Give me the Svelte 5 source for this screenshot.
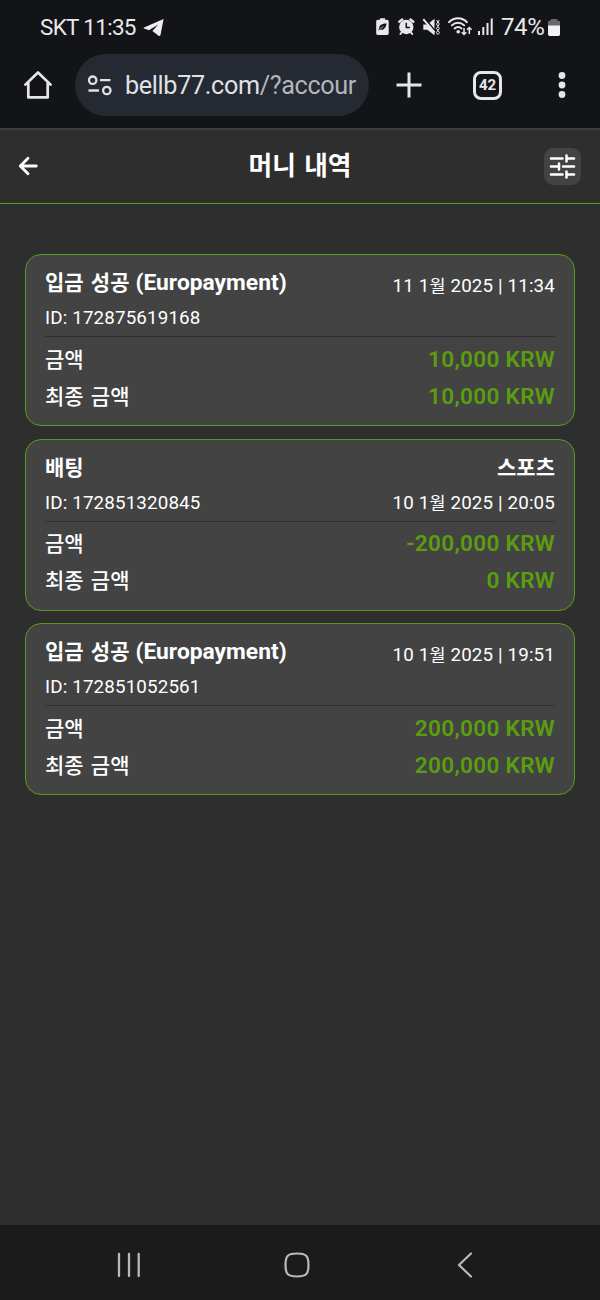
<script>
  const entries = [
    { title: '입금 성공', method: '(Europayment)', id: '172875619168', date: ['11 1', '월', ' 2025 | 11:34'], amount: '10,000 KRW', total: '10,000 KRW' },
    { title: '배팅', category: '스포츠', id: '172851320845', date: ['10 1', '월', ' 2025 | 20:05'], amount: '-200,000 KRW', total: '0 KRW' },
    { title: '입금 성공', method: '(Europayment)', id: '172851052561', date: ['10 1', '월', ' 2025 | 19:51'], amount: '200,000 KRW', total: '200,000 KRW' },
  ];
</script>

<div class="screen">
  <div class="status">
    <span class="carrier">SKT 11:35</span>
    <svg class="plane" width="22" height="20" viewBox="0 0 22 20"><path d="M20.6 1 1 9.400c-.5.4-.4.9.1 1.100l4.900 1.700L15.200 6.500 9.400 13.100l6.200 4.600c.8.5 1.600.3 1.900-.6L20.600 1Z" fill="#eee" /></svg>
    <svg class="system" width="138" height="24" viewBox="372 15 138 24" fill="none" stroke="#e9e9eb">
      <path d="M380 18.200h5v1.600h2c1 0 1.700.8 1.700 1.700v11.800c0 1-.8 1.700-1.700 1.700h-9.200c-1 0-1.600-.8-1.600-1.700V21.500c0-1 .7-1.700 1.600-1.700h2.200Z" fill="#e9e9eb" stroke="none" />
      <path d="M386.500 23.500c-4.200.2-7.300 1.300-7.300 4.800l-1.200 2.200 1.700-.8c4 .8 6.300-1.800 6.800-6.200Z" fill="#131417" stroke="none" />
      <path d="m379.500 29.500 4-3.200" stroke-width=".7" />
      <circle cx="406.300" cy="27" r="7.200" fill="#e9e9eb" stroke="none" />
      <path d="m399.300 21.800 3-2.400M413.300 21.800l-3-2.400" stroke-width="2.400" stroke-linecap="round" />
      <path d="m402 32-1.600 2M410.600 32l1.600 2" stroke-width="2" stroke-linecap="round" />
      <path d="M406.300 22.800v4.700h3.600" stroke="#131417" stroke-width="1.500" />
      <path d="M423.300 24.500h4l7.200-5.700v16.400l-7.200-5.500h-4Z" fill="#e9e9eb" stroke="none" />
      <path d="m424.200 18.200 11.600 13.500" stroke="#131417" stroke-width="1.800" />
      <path d="m423.300 19.200 11.200 13.200" stroke-width="2" />
      <path d="m436.500 20 1.300 2-1.300 2 1.300 2.300-1.300 2 1.300 2.200-1.300 2 1 2M439.300 20l-1.300 2 1.300 2-1.300 2.300 1.300 2-1.300 2.200 1.300 2-1 2" stroke-width="1" />
      <path d="M449 22.200c5.300-5.200 12.700-5.200 18 0M451.800 25.400c3.700-3.500 8.700-3.500 12.400 0M454.600 28.500c2.200-1.900 4.700-1.900 6.900 0" stroke-width="1.900" stroke-linecap="round" />
      <circle cx="458.200" cy="31.800" r="1.800" fill="#e9e9eb" stroke="none" />
      <path d="M464 28v6.300m-2.300-2 2.300 2.200 2.300-2.200M469.300 34v-6.300m-2.300 2 2.300-2.200 2.300 2.200" stroke-width="1.500" />
      <path d="M479 31v4M483.300 27v8M487.500 23v12M491.700 18.500v16.500" stroke-width="2" />
    </svg>
    <span class="percent">74%</span>
    <svg class="battery" width="12" height="18" viewBox="0 0 12 18"><path d="M3 0h6v1.500h1.300q1.700 0 1.700 1.700V7H0V3.200q0-1.700 1.700-1.700H3Z" fill="#67686a" /><path d="M0 6.500h12v8.800q0 1.700-1.700 1.700H1.700Q0 17 0 15.300Z" fill="#f2f2f2" /></svg>
  </div>

  <div class="browser">
    <svg class="home" width="30" height="30" viewBox="0 0 30 30" fill="none" stroke="#e5e6eb" stroke-width="2.700" stroke-linejoin="round" stroke-linecap="round"><path d="M2.400 14.600 15 2.500l12.600 12.100M5.300 12.700v14.700h19.400V12.700" /></svg>
    <div class="address">
      <svg width="26" height="22" viewBox="0 0 26 22" fill="none" stroke="#dfe1e8" stroke-width="2.300"><circle cx="5.700" cy="6.200" r="3.700" /><path d="M13 6.200h10.500M1.500 16.500H12" /><circle cx="19.800" cy="16.500" r="3.700" /></svg>
      <span class="url">bellb77.com<span>/?accour</span></span>
    </div>
    <svg class="plus" width="28" height="28" viewBox="0 0 28 28" stroke="#e5e6eb" stroke-width="3"><path d="M1.500 14h25M14 1.500v25" /></svg>
    <div class="tabs">42</div>
    <svg class="dots" width="8" height="28" viewBox="0 0 8 28" fill="#e5e6eb"><circle cx="4" cy="4.500" r="3.400" /><circle cx="4" cy="14" r="3.400" /><circle cx="4" cy="23.500" r="3.400" /></svg>
  </div>

  <header>
    <svg class="back" width="22" height="22" viewBox="0 0 22 22" fill="none" stroke="#fff" stroke-width="2.800" stroke-linecap="round" stroke-linejoin="round"><path d="M18.300 11H3M10 3.200 2.300 11l7.700 7.800" /></svg>
    <h1>머니 내역</h1>
    <div class="filter">
      <svg width="27" height="27" viewBox="0 0 27 27" fill="none" stroke="#fff" stroke-width="2.500" stroke-linecap="round"><path d="M2 5.500h11.500M17.500 5.500H25M17.500 2.500v6M2 13.500h8M10 10.500v6M14 13.500h11M2 21.500h11.500M17.500 21.500H25M17.500 18.500v6" /></svg>
    </div>
  </header>

  <main>
    {#each entries as entry}
      <article>
        <div class="summary">
          <div class="left">
            <strong>{entry.title}{#if entry.method}<span class="method">{entry.method}</span>{/if}</strong>
            <span class="small">ID: {entry.id}</span>
          </div>
          <div class="right">
            {#if entry.category}<strong>{entry.category}</strong>{/if}
            <span class="small" class:alone={!entry.category}>{entry.date[0]}<span class="month">{entry.date[1]}</span>{entry.date[2]}</span>
          </div>
        </div>
        <div class="row"><span>금액</span><b>{entry.amount}</b></div>
        <div class="row"><span>최종 금액</span><b>{entry.total}</b></div>
      </article>
    {/each}
  </main>

  <nav>
    <svg width="26" height="28" viewBox="0 0 26 28" stroke="#b9b9b9" stroke-width="2.300" stroke-linecap="round"><path d="M3 3v22M13 3v22M22.700 3v22" /></svg>
    <svg class="home-key" width="28" height="28" viewBox="0 0 28 28" fill="none" stroke="#b9b9b9" stroke-width="2.200"><path d="M14 2.500c9 0 11.500 2 11.500 11.500S23 25.500 14 25.500 2.500 23.500 2.500 14 5 2.500 14 2.500Z" /></svg>
    <svg width="18" height="28" viewBox="0 0 18 28" fill="none" stroke="#b9b9b9" stroke-width="2.200" stroke-linecap="round" stroke-linejoin="round"><path d="M15 2.500 3 14l12 11.500" /></svg>
  </nav>
</div>

<style>
  :global(body) { margin: 0; background: #2e2e2e; }
  .screen {
    width: 600px; height: 1300px; display: flex; flex-direction: column; overflow: hidden;
    background: #2e2e2e; color: #fff; font-family: Roboto, "Noto Sans CJK KR", sans-serif;
  }
  svg { display: block; flex: none; }
  .status {
    height: 54px; box-sizing: border-box; background: #131417; color: #e9e9eb; display: flex;
    align-items: center; padding-left: 40px; font-size: 22.500px; white-space: nowrap; flex: none;
  }
  .carrier { width: 103px; letter-spacing: -.7px; }
  .plane { margin-top: 1px; }
  .system { margin-left: 207px; }
  .status .system { margin-right: -9px; }
  .percent { width: 47px; font-size: 24px; letter-spacing: -.4px; }
  .battery { margin-top: 1px; }
  .browser {
    height: 76px; box-sizing: border-box; border-bottom: 2px solid #3d3e42; background: #131417;
    display: flex; align-items: flex-start; padding-left: 23px; flex: none;
  }
  .home { margin-top: 16px; }
  .address {
    width: 294px; height: 62px; box-sizing: border-box; margin-left: 22px; border-radius: 31px;
    background: #252931; display: flex; align-items: center; padding-left: 12px; gap: 12px;
  }
  .url { font-size: 25.200px; letter-spacing: -.35px; color: #dfe1e8; white-space: nowrap; }
  .url span { color: #b3b6bd; }
  .plus { margin: 17px 0 0 26px; }
  .tabs {
    width: 29px; height: 29px; margin: 17px 0 0 50px; box-sizing: border-box; border: 3px solid #e5e6eb;
    border-radius: 8px; color: #e5e6eb; font-size: 15px; line-height: 23px; text-align: center; font-weight: 700;
  }
  .dots { margin: 17px 0 0 56px; }
  header {
    height: 74px; box-sizing: border-box; border-bottom: 1px solid #5a9a1c; display: grid;
    grid-template-columns: 37px 1fr 37px; align-items: center; padding: 0 18px 1px 18px; flex: none;
  }
  h1 { margin: 0; font-size: 25.700px; line-height: 36px; font-weight: 700; text-align: center; word-spacing: 2px; }
  .filter { width: 37px; height: 37px; margin-left: -1px; border-radius: 9px; background: #434343; display: grid; place-items: center; }
  main { flex: 1; padding: 50px 25px 0; display: flex; flex-direction: column; gap: 12.600px; }
  article {
    height: 172px; box-sizing: border-box; border: 1px solid #5c981f; border-radius: 16px;
    background: #434343; padding: 10px 19px 0; flex: none;
  }
  .summary { height: 72px; box-sizing: border-box; border-bottom: 1px solid #2e2e2e; display: flex; justify-content: space-between; }
  .left, .right { display: flex; flex-direction: column; white-space: nowrap; }
  .right { align-items: flex-end; }
  strong { display: flex; align-items: baseline; gap: 6px; height: 36px; font-size: 21px; line-height: 36px; font-weight: 700; word-spacing: 2px; }
  .method { font-size: 22.800px; }
  .small { font-size: 18.750px; line-height: 34px; letter-spacing: .15px; }
  .month { font-size: 17.500px; line-height: 1; }
  .alone { padding-top: 4px; }
  .row { height: 37.300px; line-height: 37.300px; font-size: 21px; word-spacing: 2px; display: flex; align-items: baseline; justify-content: space-between; padding-top: 3.500px; margin-bottom: -3.500px; }
  .row span { font-weight: 500; }
  b { color: #5a9e10; font-size: 22.600px; font-weight: 600; letter-spacing: .3px; word-spacing: 0; }
  nav {
    height: 75px; box-sizing: border-box; background: #1b1b1b; display: flex; align-items: center;
    padding: 5px 126px 0 116px; justify-content: space-between; flex: none;
  }
  .home-key { margin-right: 5px; }
</style>
